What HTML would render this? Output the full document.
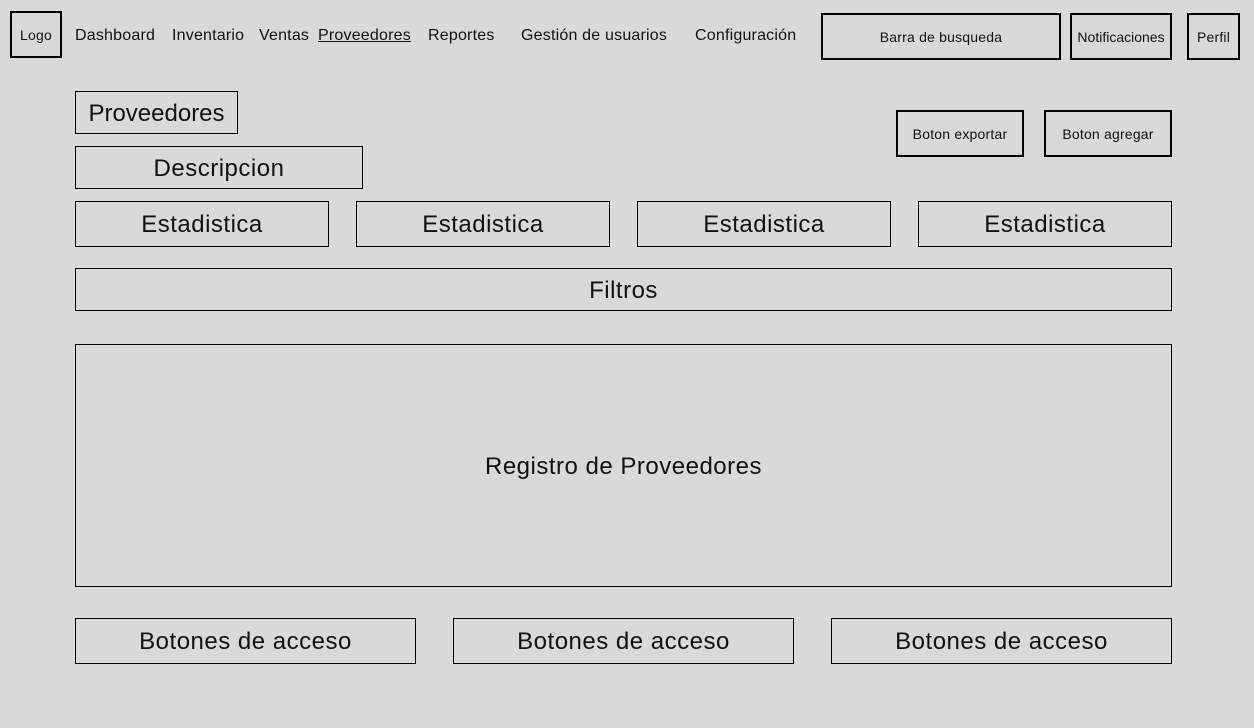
<!DOCTYPE html>
<html><head><meta charset="utf-8"><style>
html,body{margin:0;padding:0;}
body{width:1254px;height:728px;background:#d9d9d9;position:relative;overflow:hidden;font-family:"Liberation Sans",sans-serif;color:#111;}
.b{position:absolute;box-sizing:border-box;border:1px solid #000;display:flex;align-items:center;justify-content:center;white-space:nowrap;}
.t{border-width:2px;font-size:14px;letter-spacing:0.2px;}
.h{font-size:24px;letter-spacing:0.5px;padding-top:2px;}
.n{position:absolute;font-size:16px;top:27px;white-space:nowrap;letter-spacing:0.2px;}
</style></head><body>
<div class="b t" style="left:10px;top:11px;width:52px;height:47px;">Logo</div>
<div class="n" style="left:75px;">Dashboard</div>
<div class="n" style="left:172px;">Inventario</div>
<div class="n" style="left:259px;">Ventas</div>
<div class="n" style="left:318px;text-decoration:underline;">Proveedores</div>
<div class="n" style="left:428px;">Reportes</div>
<div class="n" style="left:521px;">Gestión de usuarios</div>
<div class="n" style="left:695px;">Configuración</div>
<div class="b t" style="left:821px;top:13px;width:240px;height:47px;">Barra de busqueda</div>
<div class="b t" style="left:1070px;top:13px;width:102px;height:47px;letter-spacing:0;">Notificaciones</div>
<div class="b t" style="left:1187px;top:13px;width:53px;height:47px;">Perfil</div>
<div class="b t" style="left:896px;top:110px;width:128px;height:47px;">Boton exportar</div>
<div class="b t" style="left:1044px;top:110px;width:128px;height:47px;">Boton agregar</div>
<div class="b h" style="left:75px;top:91px;width:163px;height:43px;letter-spacing:0;">Proveedores</div>
<div class="b h" style="left:75px;top:146px;width:288px;height:43px;">Descripcion</div>
<div class="b h" style="left:75px;top:201px;width:254px;height:46px;">Estadistica</div>
<div class="b h" style="left:356px;top:201px;width:254px;height:46px;">Estadistica</div>
<div class="b h" style="left:637px;top:201px;width:254px;height:46px;">Estadistica</div>
<div class="b h" style="left:918px;top:201px;width:254px;height:46px;">Estadistica</div>
<div class="b h" style="left:75px;top:268px;width:1097px;height:43px;">Filtros</div>
<div class="b h" style="left:75px;top:344px;width:1097px;height:243px;">Registro de Proveedores</div>
<div class="b h" style="left:75px;top:618px;width:341px;height:46px;">Botones de acceso</div>
<div class="b h" style="left:453px;top:618px;width:341px;height:46px;">Botones de acceso</div>
<div class="b h" style="left:831px;top:618px;width:341px;height:46px;">Botones de acceso</div>
</body></html>
